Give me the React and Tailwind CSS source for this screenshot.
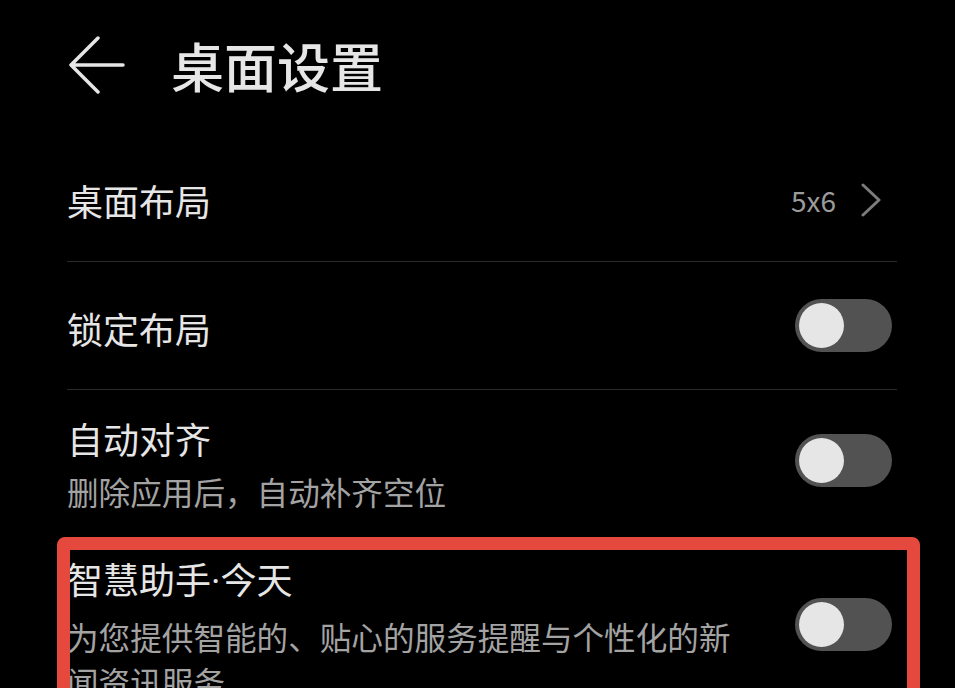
import React from "react";

const font = {
  fontFamily: '"Noto Sans CJK SC", "Noto Sans", Roboto, sans-serif',
};

function Toggle() {
  return (
    <div className="w-[97px] h-[53px] rounded-full bg-[#525252] p-[4px] shrink-0 flex items-center">
      <div className="w-[45px] h-[45px] rounded-full bg-[#e6e6e6]" />
    </div>
  );
}

export default function App() {
  return (
    <div
      className="relative w-full h-[688px] overflow-hidden bg-black text-[#e6e6e6]"
      style={font}
    >
      {/* header */}
      <header className="flex items-center h-[139px] pl-[69px] pb-[10px]">
        <svg
          width="56"
          height="58"
          viewBox="0 0 56 58"
          fill="none"
          stroke="#e6e6e6"
          strokeWidth="3.5"
          strokeLinecap="round"
          strokeLinejoin="round"
        >
          <path d="M2 29 L29 2 M2 29 L29 56 M2 29 H54" />
        </svg>
        <h1 className="ml-[46px] text-[53px] leading-[60px] font-medium">
          桌面设置
        </h1>
      </header>

      <div className="pl-[67px] pr-[58px]">
        {/* 桌面布局 */}
        <div className="flex items-center justify-between h-[123px] border-b border-[#2b2b2b]">
          <span className="text-[36px] leading-[44px]">桌面布局</span>
          <div className="flex items-center mr-[15px]">
            <span className="text-[28px] leading-[34px] text-[#9b9b9b]">5x6</span>
            <svg
              className="ml-[24px]"
              width="22"
              height="34"
              viewBox="0 0 22 34"
              fill="none"
              stroke="#7c7c7c"
              strokeWidth="3"
              strokeLinecap="round"
              strokeLinejoin="round"
            >
              <path d="M3 2 L19 17 L3 32" />
            </svg>
          </div>
        </div>

        {/* 锁定布局 */}
        <div className="flex items-center justify-between h-[128px] border-b border-[#2b2b2b]">
          <span className="text-[36px] leading-[44px] mt-[4px]">锁定布局</span>
          <div className="mr-[5px]">
            <Toggle />
          </div>
        </div>

        {/* 自动对齐 */}
        <div className="flex items-start justify-between pt-[26px] pb-[42px]">
          <div>
            <div className="text-[36px] leading-[44px]">自动对齐</div>
            <div className="mt-[9px] text-[31.6px] leading-[45px] text-[#a3a3a3]">
              删除应用后，自动补齐空位
            </div>
          </div>
          <div className="mt-[18px] mr-[5px]">
            <Toggle />
          </div>
        </div>

        {/* 智慧助手·今天 */}
        <div className="flex items-start justify-between">
          <div className="w-[680px]">
            <div className="text-[36px] leading-[44px]">
              智慧助手
              <span className="font-['Roboto',sans-serif]">·</span>
              今天
            </div>
            <div className="mt-[10px] text-[31.6px] leading-[45px] text-[#a3a3a3]">
              为您提供智能的、贴心的服务提醒与个性化的新闻资讯服务
            </div>
          </div>
          <div className="mt-[42px] mr-[5px]">
            <Toggle />
          </div>
        </div>
      </div>

      {/* red annotation box */}
      <div className="absolute left-[57px] top-[537px] w-[863px] h-[220px] border-[13px] border-[#e5493d] rounded-[8px] pointer-events-none" />
    </div>
  );
}
